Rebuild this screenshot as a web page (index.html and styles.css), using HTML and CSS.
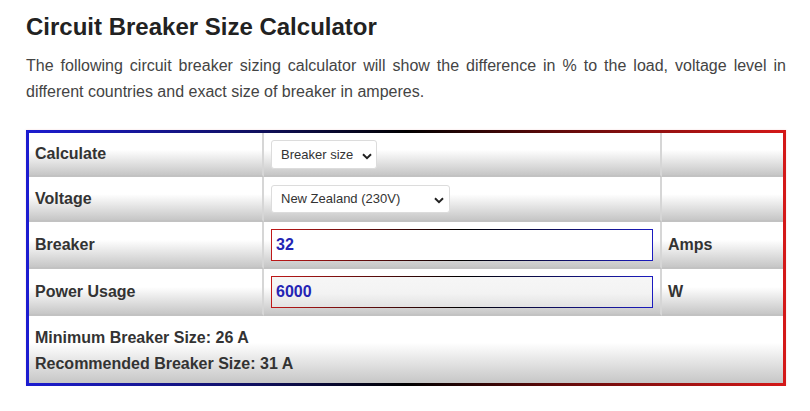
FILE: index.html
```html
<!DOCTYPE html>
<html lang="en">
<head>
<meta charset="utf-8">
<title>Circuit Breaker Size Calculator</title>
<link rel="stylesheet" href="styles.css">
</head>
<body>
<main class="page">
  <h1 class="title">Circuit Breaker Size Calculator</h1>
  <p class="intro">The following circuit breaker sizing calculator will show the difference in % to the load, voltage level in different countries and exact size of breaker in amperes.</p>
  <div class="calc">
    <div class="cell label r1">Calculate</div>
    <div class="cell r1"><select class="sel sel-calc"><option>Breaker size</option></select></div>
    <div class="cell last r1"></div>

    <div class="cell label r2">Voltage</div>
    <div class="cell r2"><select class="sel sel-volt"><option>New Zealand (230V)</option></select></div>
    <div class="cell last r2"></div>

    <div class="cell label r3">Breaker</div>
    <div class="cell r3"><input class="num" type="text" value="32"></div>
    <div class="cell label last r3">Amps</div>

    <div class="cell label r4">Power Usage</div>
    <div class="cell r4"><input class="num num-active" type="text" value="6000"></div>
    <div class="cell label last r4">W</div>

    <div class="cell result">
      <div>Minimum Breaker Size: 26 A</div>
      <div>Recommended Breaker Size: 31 A</div>
    </div>
  </div>
</main>
</body>
</html>
```
FILE: styles.css
```css
html, body {
  margin: 0;
  padding: 0;
  background: #fff;
}
.page {
  width: 760px;
  padding: 13px 24px 0 26px;
  font-family: "Liberation Sans", Arial, sans-serif;
}
.title {
  margin: 0;
  font-size: 24px;
  line-height: 28px;
  font-weight: bold;
  color: #222;
}
.intro {
  margin: 12px 0 0;
  font-size: 16px;
  line-height: 26px;
  color: #444;
  text-align: justify;
}
.calc {
  margin-top: 25px;
  display: grid;
  grid-template-columns: 235px 398px 1fr;
  grid-template-rows: 44px 45px 47px 47px auto;
  border: 3px solid;
  border-image: linear-gradient(to right, #1c1cd0 0%, #101060 30%, #000 50%, #600a0a 70%, #d41818 100%) 1;
  box-shadow: 0 0 2px rgba(200, 30, 30, 0.15);
}
.cell {
  display: flex;
  align-items: center;
  padding: 0 7px 0 6px;
  background: linear-gradient(to bottom, #fff 0%, #fff 40%, #c6c6c6 100%);
  border-bottom: 2px solid #c2c2c2;
  border-right: 2px solid #d6d6d6;
  box-sizing: border-box;
  min-width: 0;
}
.cell.last {
  border-right: 0;
}
.label {
  font-size: 16px;
  font-weight: bold;
  color: #333;
}
.sel {
  appearance: none;
  -webkit-appearance: none;
  font-family: "Liberation Sans", Arial, sans-serif;
  font-size: 13px;
  color: #333;
  background-color: #fff;
  background-image: url("data:image/svg+xml,%3Csvg xmlns='http://www.w3.org/2000/svg' width='10' height='7' viewBox='0 0 10 7'%3E%3Cpath d='M1 1.3 L5 5.2 L9 1.3' fill='none' stroke='%23222' stroke-width='2'/%3E%3C/svg%3E");
  background-repeat: no-repeat;
  border: 1px solid #dcdcdc;
  border-radius: 3px;
  padding: 0 0 0 9px;
  margin: 0 0 0 1px;
}
.sel-calc {
  width: 106px;
  height: 29px;
  background-position: 90px 12px;
}
.sel-volt {
  width: 179px;
  height: 28px;
  background-position: 162px 11px;
}
.num {
  width: 383px;
  height: 32px;
  box-sizing: border-box;
  margin: 0 0 0 1px;
  padding: 0 0 0 4px;
  border: 1px solid;
  border-image: linear-gradient(to right, #c01818 0%, #000 50%, #1c1cc0 100%) 1;
  background: #fff;
  font-family: "Liberation Sans", Arial, sans-serif;
  font-size: 16px;
  font-weight: bold;
  color: #2424b4;
  outline: none;
}
.num-active {
  background: linear-gradient(to bottom, #f6f6f6 0%, #f3f3f3 55%, #e2e2e2 100%);
}
.result {
  grid-column: 1 / -1;
  display: block;
  padding: 9px 7px 6px 6px;
  border-right: 0;
  border-bottom: 0;
  font-size: 16px;
  line-height: 26px;
  font-weight: bold;
  color: #333;
}
```
